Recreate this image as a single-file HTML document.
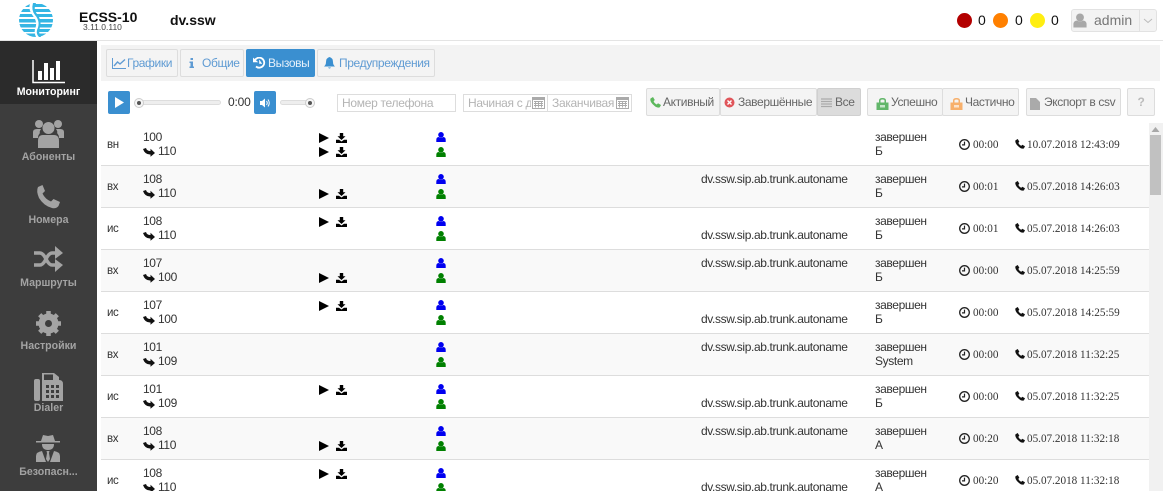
<!DOCTYPE html>
<html><head><meta charset="utf-8"><style>
html,body{margin:0;padding:0;width:1163px;height:491px;overflow:hidden;background:#fff}
body{position:relative;font-family:"Liberation Sans",sans-serif;font-size:12px;color:#333}
.a,.t,.b,.r{position:absolute}
.t{white-space:nowrap;line-height:14px}
.b{box-sizing:border-box;border:1px solid #ddd;background:#f4f4f4;border-radius:2px;height:28px;line-height:26px;white-space:nowrap;color:#666;letter-spacing:-.38px}
.b svg{position:absolute}
.b span{position:absolute;top:0}
.tab{top:49px;color:#5f9bd3}
.r{left:101px;width:1048px;border-bottom:1px solid #ddd;height:41px}
.r.o{background:#f9f9f9}
.r .t{font-size:12px;letter-spacing:-.38px}
.r .s{font-family:"Liberation Serif",serif;font-size:11.2px;letter-spacing:-.01px;left:872px;top:14px}
.r .s.dt{left:926px}
.r .dir{left:6px;top:14px;font-size:11.5px}
.l1{top:6px}.l2{top:20px}
.num{left:42px}.num2{left:57px}.tk{left:600px}.st{left:774px}
.r svg{position:absolute}
.pl{left:218px;width:10px;height:10px}
.dl{left:235px;width:11px;height:10px}
.t1{top:9px}.t2{top:23px}
.ub{left:335px;top:8px;width:10px;height:10px;fill:#0000f0}
.ug{left:335px;top:23px;width:10px;height:10px;fill:#008000}
.ar{left:42px;top:24px;width:12px;height:9px}
.ck{left:858px;top:15px;width:11px;height:11px}
.pn{left:914px;top:15px;width:10px;height:10px}
.n{position:absolute;left:0;width:97px;text-align:center;font-weight:bold;font-size:10.6px;color:#a3a3a3;line-height:13px}
input{position:absolute;box-sizing:border-box;border:1px solid #ddd;background:#fff;height:18px;font:12px "Liberation Sans",sans-serif;letter-spacing:-.3px;padding:0 4px;margin:0;outline:none}
input::placeholder{color:#b4b4b4;opacity:1}
.tr{position:absolute;height:5px;background:#eee;border:1px solid #ddd;border-radius:3px;box-sizing:border-box}
.k{position:absolute;width:10px;height:10px;border-radius:50%;background:#f6f6f6;border:1px solid #ccc;box-sizing:border-box}
.k:after{content:"";position:absolute;left:2px;top:2px;width:4px;height:4px;border-radius:50%;background:#555}
</style></head><body>
<svg width="0" height="0" style="position:absolute"><defs>
<symbol id="play" viewBox="0 0 10 10"><path d="M0 0L10 5L0 10Z" fill="#000"/></symbol>
<symbol id="dl" viewBox="0 0 11 10"><path d="M3.800 0H7.200V3.200H9.500L5.500 7L1.500 3.200H3.800ZM0 6.800H3L5.500 8.500L8 6.800H11V10H0Z" fill="#000"/></symbol>
<symbol id="u" viewBox="0 0 10 10"><circle cx="5" cy="2.800" r="2.800"/><path d="M0.300 10V7.800Q0.300 5.200 2.800 5Q5 6.500 7.200 5Q9.700 5.200 9.700 7.800V10Z"/></symbol>
<symbol id="arr" viewBox="0 0 12 9"><path d="M0 1L3 0Q3.800 3 7.500 3V.8L12 5L7.500 8.700V6.500Q2 6.800 0 1Z" fill="#111"/></symbol>
<symbol id="clk" viewBox="0 0 11 11"><circle cx="5.500" cy="5.500" r="4.800" fill="none" stroke="#222" stroke-width="1.300"/><path d="M5.500 2.600V5.900H3" fill="none" stroke="#222" stroke-width="1.200"/></symbol>
<symbol id="ph" viewBox="0 0 11 11"><path d="M.5 1.500L3 0L4.800 3L3.600 4.300Q4.500 6.500 6.800 7.500L8 6.300L11 8L9.800 10.300Q7 11.500 3.800 8.300Q-.5 4.500 .5 1.500Z" fill="#111"/></symbol>
<symbol id="lock" viewBox="0 0 13 13"><path d="M3 6V3.500Q3 1 6.500 1Q10 1 10 3.500V6H8.500V3.500Q8.500 2.500 6.500 2.500Q4.500 2.500 4.500 3.500V6Z"/><path d="M0.500 5.500H12.500V13H0.500Z"/><path d="M4 8H9V10.500H4Z" fill="#fff" opacity=".65"/></symbol>
<symbol id="cal" viewBox="0 0 13 13"><path d="M0.500 1.500H12.500V12.500H0.500Z" fill="#fff" stroke="#aaa"/><path d="M0.500 1.500H12.500V4H0.500Z" fill="#aaa"/><path d="M2 5.500H11M2 7.500H11M2 9.500H11M3.500 5V11.500M6.500 5V11.500M9.500 5V11.500" stroke="#aaa" stroke-width=".9"/></symbol>
</defs></svg>

<!-- header -->
<div class="a" style="left:0;top:40px;width:1163px;height:1px;background:#e4e4e4"></div>
<svg class="a" style="left:19px;top:3px" width="34" height="34" viewBox="0 0 34 34">
<defs><clipPath id="c"><circle cx="17" cy="17" r="17"/></clipPath></defs>
<g clip-path="url(#c)" fill="#35b6e4"><rect x="0" y="1" width="34" height="3"/><rect x="0" y="6" width="34" height="3"/><rect x="0" y="11" width="34" height="3"/><rect x="0" y="16" width="34" height="3.500"/><rect x="0" y="21" width="34" height="3.500"/><rect x="0" y="26" width="34" height="3"/><rect x="0" y="30.500" width="34" height="3.500"/></g>
<path d="M11 0Q9 7 14 13Q19 19 16 26Q15 30 17 34L20 34Q18 30 20 24Q22 17 16 11Q13 6 16 0Z" fill="#fff"/>
<path d="M14 0Q12 7 16 12Q22 19 18 27Q17 31 20 34L22 34Q19 30 21 24Q23 17 18 11Q14 6 17 0Z" fill="#35b6e4"/>
</svg>
<div class="t" style="left:79px;top:10px;font-weight:bold;font-size:14px;color:#111">ECSS-10</div>
<div class="t" style="left:83px;top:21px;font-size:8.500px;color:#444;line-height:12px">3.11.0.110</div>
<div class="t" style="left:170px;top:13px;font-weight:bold;font-size:14px;color:#111">dv.ssw</div>
<div class="a" style="left:957px;top:13px;width:15px;height:15px;border-radius:50%;background:#b30000"></div>
<div class="t" style="left:978px;top:13px;font-size:14px;color:#111">0</div>
<div class="a" style="left:993px;top:13px;width:15px;height:15px;border-radius:50%;background:#ff8000"></div>
<div class="t" style="left:1015px;top:13px;font-size:14px;color:#111">0</div>
<div class="a" style="left:1030px;top:13px;width:15px;height:15px;border-radius:50%;background:#ffee11"></div>
<div class="t" style="left:1051px;top:13px;font-size:14px;color:#111">0</div>
<div class="a" style="left:1071px;top:9px;width:86px;height:23px;box-sizing:border-box;border:1px solid #e2e2e2;background:#f3f3f3;border-radius:3px"></div>
<div class="a" style="left:1139px;top:9px;width:1px;height:23px;background:#e2e2e2"></div>
<svg class="a" style="left:1073px;top:13px;fill:#a8a8a8" width="14" height="15"><use href="#u"/></svg>
<div class="t" style="left:1094px;top:13px;font-size:14px;color:#777">admin</div>
<svg class="a" style="left:1143px;top:18px" width="10" height="6"><path d="M1 1L5 4.500L9 1" fill="none" stroke="#bbb"/></svg>

<!-- sidebar -->
<div class="a" style="left:0;top:41px;width:97px;height:450px;background:#3d3d3d"></div>
<div class="a" style="left:0;top:41px;width:97px;height:63px;background:#2b2b2b"></div>
<svg class="a" style="left:32px;top:59px" width="34" height="25"><path d="M1 1V23.500H33" fill="none" stroke="#fff" stroke-width="1.500"/><rect x="6" y="12" width="4" height="9" fill="#fff"/><rect x="12" y="4" width="4" height="17" fill="#fff"/><rect x="18" y="9" width="4" height="12" fill="#fff"/><rect x="24" y="2" width="4" height="19" fill="#fff"/></svg>
<div class="n" style="top:86px;color:#fff">Мониторинг</div>
<svg class="a" style="left:33px;top:120px;fill:#a3a3a3" width="31" height="29" viewBox="0 0 31 29"><circle cx="6" cy="4" r="4"/><circle cx="25" cy="4" r="4"/><circle cx="15.500" cy="8" r="6"/><path d="M0 18V12Q0 9 4 9H8Q6 12 7 13Q5 15 5 18ZM31 18V12Q31 9 27 9H23Q25 12 24 13Q26 15 26 18ZM5 28V21Q5 15 10 15H21Q26 15 26 21V28Z"/></svg>
<div class="n" style="top:151px">Абоненты</div>
<svg class="a" style="left:36px;top:185px;fill:#a3a3a3" width="25" height="24" viewBox="0 0 25 24"><path d="M2 2L6.500 0L9 6L6.500 8.500Q9 14 15 16.500L17.500 14L24 17L22.500 21Q20 24 16 23Q8 21 3 13Q0 6 2 2Z"/></svg>
<div class="n" style="top:214px">Номера</div>
<svg class="a" style="left:33px;top:246px" width="30" height="26" viewBox="0 0 30 26"><path d="M1 7H7Q10 7 13 13Q16 19 19 19H23M1 19H7Q10 19 13 13Q16 7 19 7H23" fill="none" stroke="#a3a3a3" stroke-width="3.500"/><path d="M22 0L30 7L22 13ZM22 13L30 19L22 26Z" fill="#a3a3a3"/></svg>
<div class="n" style="top:277px">Маршруты</div>
<svg class="a" style="left:36px;top:311px" width="25" height="25" viewBox="0 0 25 25"><circle cx="12.500" cy="12.500" r="7" fill="none" stroke="#a3a3a3" stroke-width="6"/><path d="M12.500 0V25M0 12.500H25M3.700 3.700L21.300 21.300M21.300 3.700L3.700 21.300" stroke="#a3a3a3" stroke-width="4.500"/><circle cx="12.500" cy="12.500" r="3.500" fill="#3d3d3d"/></svg>
<div class="n" style="top:340px">Настройки</div>
<svg class="a" style="left:34px;top:372px" width="29" height="29" viewBox="0 0 29 29"><rect x="0" y="7" width="6" height="22" rx="2" fill="#a3a3a3"/><path d="M8 8V1H20L25 5V8Q29 8 29 12V29H8Z" fill="#a3a3a3"/><path d="M10 2.500H19V8H10Z" fill="#3d3d3d"/><path d="M12 13h3v3h-3zM17 13h3v3h-3zM22 13h3v3h-3zM12 18h3v3h-3zM17 18h3v3h-3zM22 18h3v3h-3zM12 23h3v3h-3zM17 23h3v3h-3zM22 23h3v3h-3z" fill="#3d3d3d"/></svg>
<div class="n" style="top:402px">Dialer</div>
<svg class="a" style="left:36px;top:435px;fill:#a3a3a3" width="24" height="27" viewBox="0 0 24 27"><path d="M7 0L12 1L17 0L19 6H24V7.500H0V6H5Z"/><path d="M6 9H18Q18 15 12 15Q6 15 6 9Z"/><path d="M0 27V21Q0 17 6 16L10 27ZM24 27V21Q24 17 18 16L14 27ZM10.500 16H13.500L13 18L14 24L12 27L10 24L11 18Z"/></svg>
<div class="n" style="top:466px">Безопасн...</div>

<!-- tabs panel -->
<div class="a" style="left:101px;top:45px;width:1059px;height:36px;background:#f3f3f3"></div>
<div class="b tab" style="left:106px;width:72px"><svg style="left:5px;top:8px" width="14" height="11"><path d="M.5 0V10.500H14" fill="none" stroke="#5f9bd3"/><path d="M2 8L5.500 4L8 6L13 1.500" fill="none" stroke="#5f9bd3" stroke-width="1.400"/></svg><span style="left:20px">Графики</span></div>
<div class="b tab" style="left:180px;width:64px"><svg style="left:8px;top:8px" width="6" height="12"><path d="M1.500 0H4V2H1.500ZM.5 3.500H4V8.500H5V10H.5V8.500H1.500V5H.5Z" fill="#5f9bd3"/></svg><span style="left:21px">Общие</span></div>
<div class="b tab" style="left:246px;width:69px;background:#3a8fd0;border-color:#3a8fd0;color:#e6f0fa"><svg style="left:6px;top:7px" width="13" height="12" viewBox="0 0 13 12"><path d="M1.500 4A5 5 0 1 1 3 9.500" fill="none" stroke="#fff" stroke-width="1.800"/><path d="M0 1L4.500 5H0ZM6.500 3V6.500H9" fill="#fff" stroke="#fff" stroke-width=".6"/></svg><span style="left:21px">Вызовы</span></div>
<div class="b tab" style="left:317px;width:118px"><svg style="left:6px;top:7px" width="11" height="12" viewBox="0 0 11 12"><path d="M5.500 0Q9 1 9 5Q9 8 11 9.500H0Q2 8 2 5Q2 1 5.500 0ZM4 10.500H7Q5.500 12.500 4 10.500Z" fill="#3a8fd0"/></svg><span style="left:21px">Предупреждения</span></div>

<!-- player -->
<div class="a" style="left:108px;top:91px;width:22px;height:23px;background:#3a8fd0;border-radius:2px"></div>
<svg class="a" style="left:115px;top:97px" width="9" height="11"><path d="M0 0L9 5.500L0 11Z" fill="#fff"/></svg>
<div class="tr" style="left:138px;top:100px;width:83px"></div>
<div class="k" style="left:134px;top:98px"></div>
<div class="t" style="left:228px;top:95px;color:#333;letter-spacing:-.2px">0:00</div>
<div class="a" style="left:254px;top:91px;width:22px;height:23px;background:#3a8fd0;border-radius:2px"></div>
<svg class="a" style="left:260px;top:98px" width="11" height="10"><path d="M0 3H2L5 .5V9.500L2 7H0Z" fill="#fff"/><path d="M6.500 3Q8 5 6.500 7M8 1.500Q10.500 5 8 8.500" fill="none" stroke="#fff"/></svg>
<div class="tr" style="left:280px;top:100px;width:30px"></div>
<div class="k" style="left:305px;top:98px"></div>
<input style="left:337px;top:94px;width:119px" placeholder="Номер телефона">
<input style="left:463px;top:94px;width:85px" placeholder="Начиная с д">
<input style="left:547px;top:94px;width:85px" placeholder="Заканчивая">
<div class="a" style="left:531px;top:95px;width:16px;height:16px;background:#fff"></div>
<div class="a" style="left:615px;top:95px;width:16px;height:16px;background:#fff"></div>
<svg class="a" style="left:532px;top:96px" width="13" height="13"><use href="#cal"/></svg>
<svg class="a" style="left:616px;top:96px" width="13" height="13"><use href="#cal"/></svg>

<!-- filters -->
<div class="b" style="left:646px;top:88px;width:74px"><svg style="left:3px;top:8px" width="11" height="11" viewBox="0 0 11 11"><path d="M.5 1.500L3 0L4.800 3L3.600 4.300Q4.500 6.500 6.800 7.500L8 6.300L11 8L9.800 10.300Q7 11.500 3.800 8.300Q-.5 4.500 .5 1.500Z" fill="#5cb85c"/></svg><span style="left:16px">Активный</span></div>
<div class="b" style="left:720px;top:88px;width:97px"><svg style="left:3px;top:8px" width="11" height="11"><circle cx="5.500" cy="5.500" r="5" fill="#e0555a"/><path d="M3.500 3.500L7.500 7.500M7.500 3.500L3.500 7.500" stroke="#fff" stroke-width="1.400"/></svg><span style="left:17px">Завершённые</span></div>
<div class="b" style="left:817px;top:88px;width:44px;background:#dcdcdc;border-color:#d0d0d0"><svg style="left:3px;top:9px" width="11" height="10"><path d="M0 1H11M0 3.500H11M0 6H11M0 8.500H11" stroke="#aaa" stroke-width="1.300"/></svg><span style="left:17px">Все</span></div>
<div class="b" style="left:867px;top:88px;width:76px"><svg style="left:8px;top:8px;fill:#62b66a" width="13" height="13"><use href="#lock"/></svg><span style="left:23px">Успешно</span></div>
<div class="b" style="left:942px;top:88px;width:77px"><svg style="left:7px;top:8px;fill:#f7b06c" width="13" height="13"><use href="#lock"/></svg><span style="left:22px">Частично</span></div>
<div class="b" style="left:1026px;top:88px;width:95px"><svg style="left:3px;top:9px" width="10" height="12"><path d="M0 0H6L10 4V12H0Z" fill="#aaa"/></svg><span style="left:17px">Экспорт в csv</span></div>
<div class="b" style="left:1127px;top:88px;width:28px;text-align:center;color:#bbb;font-weight:bold">?</div>

<!-- rows -->
<div class="r" style="top:124px"><div class="t dir">вн</div><div class="t num l1">100</div><svg class="ar"><use href="#arr"/></svg><div class="t num2 l2">110</div><svg class="pl t1"><use href="#play"/></svg><svg class="dl t1"><use href="#dl"/></svg><svg class="pl t2"><use href="#play"/></svg><svg class="dl t2"><use href="#dl"/></svg><svg class="ub"><use href="#u"/></svg><svg class="ug"><use href="#u"/></svg><div class="t st l1">завершен</div><div class="t st l2">Б</div><svg class="ck"><use href="#clk"/></svg><div class="t s">00:00</div><svg class="pn"><use href="#ph"/></svg><div class="t s dt">10.07.2018 12:43:09</div></div>

<div class="r o" style="top:166px"><div class="t dir">вх</div><div class="t num l1">108</div><svg class="ar"><use href="#arr"/></svg><div class="t num2 l2">110</div><svg class="pl t2"><use href="#play"/></svg><svg class="dl t2"><use href="#dl"/></svg><svg class="ub"><use href="#u"/></svg><svg class="ug"><use href="#u"/></svg><div class="t tk l1">dv.ssw.sip.ab.trunk.autoname</div><div class="t st l1">завершен</div><div class="t st l2">Б</div><svg class="ck"><use href="#clk"/></svg><div class="t s">00:01</div><svg class="pn"><use href="#ph"/></svg><div class="t s dt">05.07.2018 14:26:03</div></div>

<div class="r" style="top:208px"><div class="t dir">ис</div><div class="t num l1">108</div><svg class="ar"><use href="#arr"/></svg><div class="t num2 l2">110</div><svg class="pl t1"><use href="#play"/></svg><svg class="dl t1"><use href="#dl"/></svg><svg class="ub"><use href="#u"/></svg><svg class="ug"><use href="#u"/></svg><div class="t tk l2">dv.ssw.sip.ab.trunk.autoname</div><div class="t st l1">завершен</div><div class="t st l2">Б</div><svg class="ck"><use href="#clk"/></svg><div class="t s">00:01</div><svg class="pn"><use href="#ph"/></svg><div class="t s dt">05.07.2018 14:26:03</div></div>

<div class="r o" style="top:250px"><div class="t dir">вх</div><div class="t num l1">107</div><svg class="ar"><use href="#arr"/></svg><div class="t num2 l2">100</div><svg class="pl t2"><use href="#play"/></svg><svg class="dl t2"><use href="#dl"/></svg><svg class="ub"><use href="#u"/></svg><svg class="ug"><use href="#u"/></svg><div class="t tk l1">dv.ssw.sip.ab.trunk.autoname</div><div class="t st l1">завершен</div><div class="t st l2">Б</div><svg class="ck"><use href="#clk"/></svg><div class="t s">00:00</div><svg class="pn"><use href="#ph"/></svg><div class="t s dt">05.07.2018 14:25:59</div></div>

<div class="r" style="top:292px"><div class="t dir">ис</div><div class="t num l1">107</div><svg class="ar"><use href="#arr"/></svg><div class="t num2 l2">100</div><svg class="pl t1"><use href="#play"/></svg><svg class="dl t1"><use href="#dl"/></svg><svg class="ub"><use href="#u"/></svg><svg class="ug"><use href="#u"/></svg><div class="t tk l2">dv.ssw.sip.ab.trunk.autoname</div><div class="t st l1">завершен</div><div class="t st l2">Б</div><svg class="ck"><use href="#clk"/></svg><div class="t s">00:00</div><svg class="pn"><use href="#ph"/></svg><div class="t s dt">05.07.2018 14:25:59</div></div>

<div class="r o" style="top:334px"><div class="t dir">вх</div><div class="t num l1">101</div><svg class="ar"><use href="#arr"/></svg><div class="t num2 l2">109</div><svg class="ub"><use href="#u"/></svg><svg class="ug"><use href="#u"/></svg><div class="t tk l1">dv.ssw.sip.ab.trunk.autoname</div><div class="t st l1">завершен</div><div class="t st l2">System</div><svg class="ck"><use href="#clk"/></svg><div class="t s">00:00</div><svg class="pn"><use href="#ph"/></svg><div class="t s dt">05.07.2018 11:32:25</div></div>

<div class="r" style="top:376px"><div class="t dir">ис</div><div class="t num l1">101</div><svg class="ar"><use href="#arr"/></svg><div class="t num2 l2">109</div><svg class="pl t1"><use href="#play"/></svg><svg class="dl t1"><use href="#dl"/></svg><svg class="ub"><use href="#u"/></svg><svg class="ug"><use href="#u"/></svg><div class="t tk l2">dv.ssw.sip.ab.trunk.autoname</div><div class="t st l1">завершен</div><div class="t st l2">Б</div><svg class="ck"><use href="#clk"/></svg><div class="t s">00:00</div><svg class="pn"><use href="#ph"/></svg><div class="t s dt">05.07.2018 11:32:25</div></div>

<div class="r o" style="top:418px"><div class="t dir">вх</div><div class="t num l1">108</div><svg class="ar"><use href="#arr"/></svg><div class="t num2 l2">110</div><svg class="pl t2"><use href="#play"/></svg><svg class="dl t2"><use href="#dl"/></svg><svg class="ub"><use href="#u"/></svg><svg class="ug"><use href="#u"/></svg><div class="t tk l1">dv.ssw.sip.ab.trunk.autoname</div><div class="t st l1">завершен</div><div class="t st l2">А</div><svg class="ck"><use href="#clk"/></svg><div class="t s">00:20</div><svg class="pn"><use href="#ph"/></svg><div class="t s dt">05.07.2018 11:32:18</div></div>

<div class="r" style="top:460px"><div class="t dir">ис</div><div class="t num l1">108</div><svg class="ar"><use href="#arr"/></svg><div class="t num2 l2">110</div><svg class="pl t1"><use href="#play"/></svg><svg class="dl t1"><use href="#dl"/></svg><svg class="ub"><use href="#u"/></svg><svg class="ug"><use href="#u"/></svg><div class="t tk l2">dv.ssw.sip.ab.trunk.autoname</div><div class="t st l1">завершен</div><div class="t st l2">А</div><svg class="ck"><use href="#clk"/></svg><div class="t s">00:20</div><svg class="pn"><use href="#ph"/></svg><div class="t s dt">05.07.2018 11:32:18</div></div>

<!-- scrollbar -->
<div class="a" style="left:1149px;top:123px;width:14px;height:368px;background:#f1f1f1"></div>
<div class="a" style="left:1150px;top:135px;width:11px;height:60px;background:#c1c1c1"></div>
<svg class="a" style="left:1151px;top:127px" width="9" height="5"><path d="M4.500 0L8.500 5H.5Z" fill="#a8a8a8"/></svg>
</body></html>
